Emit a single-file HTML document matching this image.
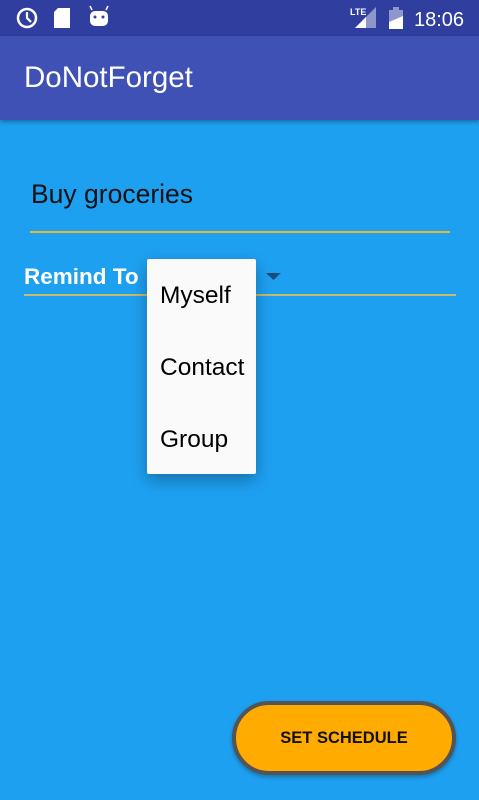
<!DOCTYPE html><html><head><style>
body{margin:0;width:479px;height:800px;background:#1ea0f1;font-family:"Liberation Sans",sans-serif;position:relative;overflow:hidden}
.sb{position:absolute;top:0;left:0;width:479px;height:36px;background:#303f9f}
.tb{position:absolute;top:36px;left:0;width:479px;height:84px;background:#3f51b5;box-shadow:0 2px 4px rgba(0,0,0,.3)}
.t{position:absolute;color:#fff}
</style></head><body>
<div class="sb">
<svg width="479" height="36" style="position:absolute;left:0;top:0">
<circle cx="27" cy="18" r="9" fill="none" stroke="#fff" stroke-width="2.5"/><path d="M27 12v6l4 4" stroke="#fff" stroke-width="2.2" fill="none"/>
<path d="M58 8h12v20h-16v-16z" fill="#fff"/>
<rect x="90" y="11" width="18" height="15" rx="5" fill="#fff"/><path d="M92 10l-2-4M106 10l2-4" stroke="#fff" stroke-width="1.5"/><circle cx="95" cy="17" r="1.5" fill="#303f9f"/><circle cx="103" cy="17" r="1.5" fill="#303f9f"/>
<text x="350" y="15" font-size="9" font-weight="bold" fill="#fff">LTE</text>
<path d="M355 28l21-21v21z" fill="#8e97cc"/><path d="M355 28l11-11v11z" fill="#fff"/>
<rect x="389" y="10" width="14" height="19" fill="#8e97cc"/><rect x="393" y="7" width="6" height="3" fill="#8e97cc"/><path d="M389 29v-7l14-6v13z" fill="#fff"/>
<text x="414" y="26" font-size="20" fill="#fff">18:06</text>
</svg></div>
<div class="tb"><div class="t" style="left:24px;top:25px;font-size:29.5px">DoNotForget</div></div>
<div class="t" style="left:31px;top:179px;font-size:26.5px;color:#111">Buy groceries</div>
<div style="position:absolute;left:30px;top:231px;width:420px;height:2px;background:#e8b62c"></div>
<div class="t" style="left:24px;top:264px;font-size:22.5px;font-weight:bold">Remind To</div>
<svg style="position:absolute;left:266px;top:273px" width="16" height="10"><path d="M0 0h15l-7.5 7z" fill="#1a4d7a"/></svg>
<div style="position:absolute;left:24px;top:294px;width:432px;height:2px;background:#c9b96a"></div>
<div style="position:absolute;left:147px;top:259px;width:109px;height:215px;background:#fafafa;border-radius:2px;box-shadow:0 6px 16px rgba(0,0,0,.3)">
<div style="position:absolute;left:13px;top:23px;font-size:24.5px">Myself</div>
<div style="position:absolute;left:13px;top:95px;font-size:24.5px">Contact</div>
<div style="position:absolute;left:13px;top:167px;font-size:24.5px">Group</div>
</div>
<div style="position:absolute;left:232px;top:701px;width:216px;height:66px;border:4px solid #545454;border-radius:38px;background:#ffab00;box-shadow:0 2px 4px rgba(0,0,0,.3);text-align:center;line-height:66px;font-size:16.5px;font-weight:bold;color:#111">SET SCHEDULE</div>
</body></html>
